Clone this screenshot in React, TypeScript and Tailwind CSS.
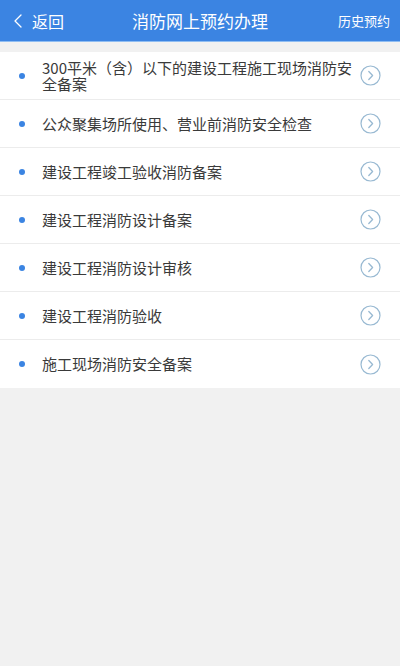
import { ChevronLeft } from 'lucide-react';

const items = [
  '300平米（含）以下的建设工程施工现场消防安全备案',
  '公众聚集场所使用、营业前消防安全检查',
  '建设工程竣工验收消防备案',
  '建设工程消防设计备案',
  '建设工程消防设计审核',
  '建设工程消防验收',
  '施工现场消防安全备案',
];

function CircleArrow() {
  return (
    <svg width="21" height="21" viewBox="0 0 21 21" fill="none">
      <circle cx="10.5" cy="10.5" r="9.5" stroke="#98b9d2" strokeWidth="1.2" />
      <path d="M8.8 6.5 L12.6 10.5 L8.8 14.5" stroke="#98b9d2" strokeWidth="1.3" strokeLinecap="round" strokeLinejoin="round" />
    </svg>
  );
}

export default function App() {
  return (
    <div
      className="w-[400px] h-[666px] bg-[#f1f1f1] flex flex-col"
      style={{ fontFamily: '"Noto Sans CJK SC", "Noto Sans", sans-serif' }}
    >
      {/* Header */}
      <div className="h-[42px] bg-[#3b84e2] border-b border-[#8fbdf2] flex items-center relative shrink-0">
        <div className="flex items-center pl-[6px] text-white">
          <ChevronLeft className="w-[24px] h-[24px]" strokeWidth={1.3} />
          <span className="text-[16px] ml-[2px]">返回</span>
        </div>
        <div className="absolute left-0 right-0 text-center text-white text-[17px] pointer-events-none">
          消防网上预约办理
        </div>
        <div className="ml-auto pr-[10px] text-white text-[13px]">历史预约</div>
      </div>

      {/* List */}
      <div className="mt-[10px] bg-white">
        {items.map((item, i) => (
          <div
            key={item}
            className={
              'h-[48px] flex items-center pl-[19px] pr-[19px] ' +
              (i < items.length - 1 ? 'border-b border-[#ececec]' : '')
            }
          >
            <div className="w-[6px] h-[6px] rounded-full bg-[#3b84e2] shrink-0" />
            <div className="flex-1 ml-[17px] pr-[8px] text-[15px] leading-[16px] text-[#3a3a3a]">
              {item}
            </div>
            <CircleArrow />
          </div>
        ))}
      </div>
    </div>
  );
}
